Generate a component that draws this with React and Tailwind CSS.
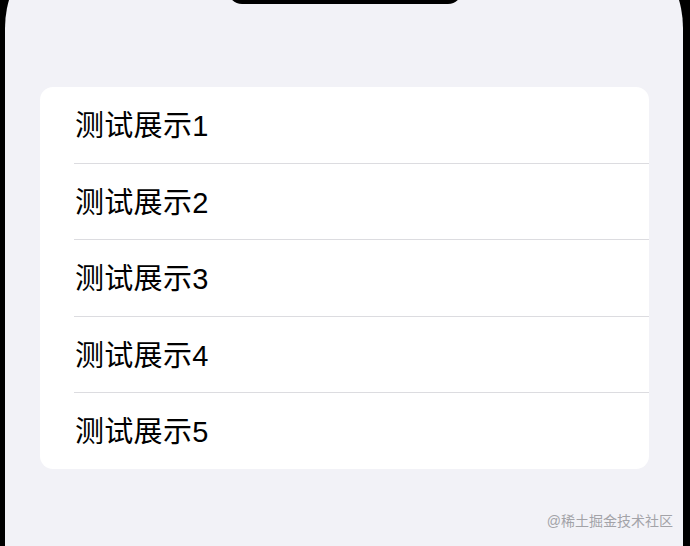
import React from 'react';

const items = ['测试展示1', '测试展示2', '测试展示3', '测试展示4', '测试展示5'];

export default function App() {
  return (
    <div
      className="relative w-[690px] h-[546px] overflow-hidden bg-black"
      style={{ fontFamily: '"Liberation Sans", "Noto Sans CJK SC", sans-serif' }}
    >
      {/* screen */}
      <div className="ml-[5px] w-[678px] h-[640px] -mt-[72px] rounded-t-[100px] bg-[#f2f2f7] pt-[159px] px-[35px]">
        <div className="w-[609px] bg-white rounded-[13px] overflow-hidden">
          {items.map((label, i) => (
            <div key={label}>
              <div className="h-[75.5px] flex items-center pl-[35px] pt-[4px] text-[29px] leading-none text-black tracking-[0.3px]">
                {label}
              </div>
              {i < items.length - 1 && <div className="ml-[34px] h-px bg-[#dcdce0]" />}
            </div>
          ))}
        </div>
      </div>

      {/* notch */}
      <div className="absolute left-[228px] top-[-40px] w-[234px] h-[44px] bg-black rounded-b-[14px]" />

      {/* watermark */}
      <div className="absolute right-[17px] top-[514px] text-[14px] leading-none text-[#a3a3a8]">
        @稀土掘金技术社区
      </div>
    </div>
  );
}
